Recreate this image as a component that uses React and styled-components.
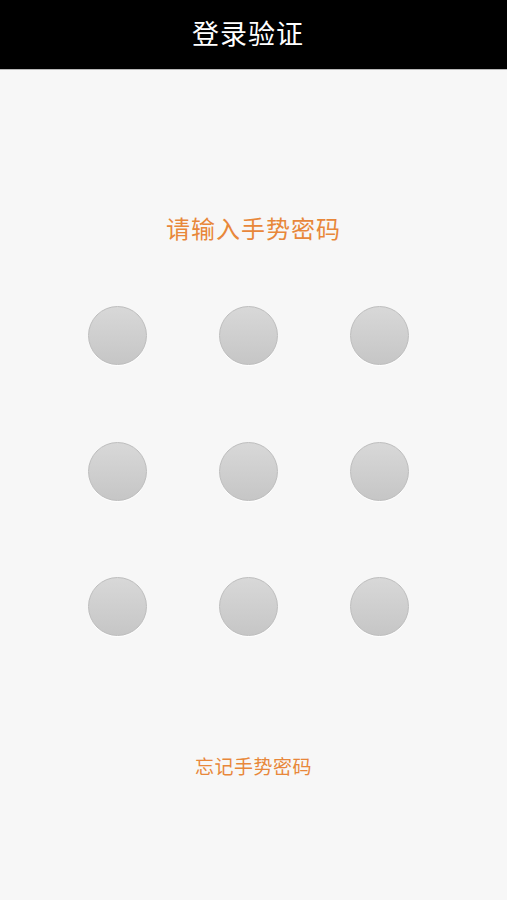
import React from "react"
import styled, { createGlobalStyle } from "styled-components"

const GlobalStyle = createGlobalStyle`
  html, body {
    margin: 0;
    padding: 0;
    background: #f7f7f7;
    font-family: "Noto Sans CJK SC", "Noto Sans", sans-serif;
  }
`

// grille 3x3 du schéma
const dots = [0, 1, 2, 3, 4, 5, 6, 7, 8]

export default function App() {
  return (
    <Page>
      <GlobalStyle />
      <TopBar>
        <Title>登录验证</Title>
      </TopBar>
      <Content>
        <Prompt>请输入手势密码</Prompt>
        <Board>
          {dots.map((d) => (
            <Dot key={d} />
          ))}
        </Board>
        <Forgot>忘记手势密码</Forgot>
      </Content>
    </Page>
  )
}

const Page = styled.div`
  width: 507px;
  height: 900px;
  display: flex;
  flex-direction: column;
  background: #f7f7f7;
`

const TopBar = styled.header`
  height: 70px;
  background: #000;
  border-bottom: 1px solid #b8b8b8;
  display: flex;
  align-items: center;
  justify-content: center;
  padding: 0 11px 4px 0;
  box-sizing: border-box;
  flex-shrink: 0;
`

const Title = styled.h1`
  margin: 0;
  color: #fff;
  font-size: 27px;
  font-weight: 400;
  letter-spacing: 1px;
  line-height: 1;
`

const Content = styled.main`
  display: flex;
  flex-direction: column;
  align-items: stretch;
  padding-top: 140px;
`

const Prompt = styled.p`
  margin: 0;
  text-align: center;
  color: #e8873a;
  font-size: 24px;
  line-height: 36px;
  letter-spacing: 1px;
`

const Board = styled.div`
  display: grid;
  grid-template-columns: repeat(3, 59px);
  column-gap: 72px;
  row-gap: 76.5px;
  padding-left: 88px;
  margin-top: 60px;
`

const Dot = styled.div`
  width: 59px;
  height: 59px;
  border-radius: 50%;
  box-sizing: border-box;
  border: 1px solid #bdbdbd;
  background: linear-gradient(to bottom, #d8d8d8, #c6c6c6);
  box-shadow: 0 1px 1px rgba(255, 255, 255, 0.9);
`

const Forgot = styled.p`
  margin: 116px 0 0;
  text-align: center;
  color: #e8873a;
  font-size: 19px;
  line-height: 28px;
  letter-spacing: 0.5px;
`
